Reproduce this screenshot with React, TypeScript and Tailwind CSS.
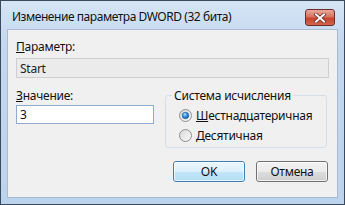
import React from "react";

// Диалог "Изменение параметра DWORD" в стиле Windows 7

const font = { fontFamily: '"Noto Sans", "Open Sans", sans-serif' };

const Radio: React.FC<{ checked?: boolean }> = ({ checked }) => (
  <svg width="13" height="13" viewBox="0 0 13 13" className="shrink-0">
    <defs>
      <linearGradient id={checked ? "rg1" : "rg0"} x1="0" y1="0" x2="1" y2="1">
        <stop offset="0" stopColor="#d8d8d8" />
        <stop offset="1" stopColor="#fbfbfb" />
      </linearGradient>
      <radialGradient id="dot" cx="0.4" cy="0.35" r="0.7">
        <stop offset="0" stopColor="#b6e3ff" />
        <stop offset="0.5" stopColor="#2c8fe0" />
        <stop offset="1" stopColor="#1a5aa0" />
      </radialGradient>
    </defs>
    <circle cx="6.5" cy="6.5" r="6" fill={`url(#${checked ? "rg1" : "rg0"})`} stroke="#8f8f8f" />
    {checked && <circle cx="6.5" cy="6.5" r="3.3" fill="url(#dot)" stroke="#1d5c97" strokeWidth="0.6" />}
  </svg>
);

const Button: React.FC<{ children: React.ReactNode; primary?: boolean }> = ({ children, primary }) => (
  <div
    className={
      primary
        ? "w-[72px] h-[21px] rounded-[3px] border border-[#3c7fb1] bg-[linear-gradient(#ecf7fd_0%,#dcf0fb_50%,#c3e6f9_51%,#b4def7_100%)] flex items-center justify-center text-[12px]"
        : "w-[72px] h-[21px] rounded-[3px] border border-[#707070] bg-[linear-gradient(#f2f2f2_0%,#ebebeb_50%,#dddddd_51%,#cfcfcf_100%)] flex items-center justify-center text-[12px]"
    }
  >
    <div className="w-full h-full rounded-[2px] border border-white/70 flex items-center justify-center">
      {children}
    </div>
  </div>
);

export default function App() {
  return (
    <div
      className="w-[345px] h-[205px] border border-[#3a4a5c] bg-[linear-gradient(#d6e5f6_0%,#c4d8f0_20%,#bcd3ee_100%)] flex flex-col text-[#111]"
      style={font}
    >
      {/* заголовок окна */}
      <div className="h-[28px] flex items-center pl-[11px] pr-[9px] pt-[3px]">
        <span className="text-[12px] tracking-[-0.45px] leading-none flex-1">Изменение параметра DWORD (32 бита)</span>
        <div className="w-[30px] h-[17px] mt-[2px] rounded-[3px] border border-[#6e2d2d] bg-[linear-gradient(#e9a99a_0%,#d7735f_45%,#c7442c_55%,#d2654e_100%)] flex items-center justify-center">
          <svg width="12" height="10" viewBox="0 0 12 10">
            <path d="M2 1.5 L10 8.5 M10 1.5 L2 8.5" stroke="#5a2020" strokeWidth="3.4" strokeLinecap="square" />
            <path d="M2 1.5 L10 8.5 M10 1.5 L2 8.5" stroke="#ffffff" strokeWidth="2" strokeLinecap="square" />
          </svg>
        </div>
      </div>

      {/* клиентская область */}
      <div className="flex-1 mx-[6px] mb-[6px] border border-[#a9bbd1] bg-[#f0f0f0] px-[8px] pt-[9px] text-[12px] tracking-[-0.25px] leading-[15px]">
        <div>
          <span className="underline">П</span>араметр:
        </div>
        <div className="mt-[4px] h-[20px] border border-[#cfcfcf] bg-[#ebebeb] px-[3px] flex items-center text-[#222]">
          Start
        </div>

        <div className="mt-[10px] flex">
          <div className="w-[138px]">
            <div>
              <span className="underline">З</span>начение:
            </div>
            <div className="mt-[2px] h-[19px] border border-[#8eaacc] bg-white px-[3px] flex items-center">
              3
            </div>
          </div>

          <div className="ml-[11px] w-[162px] relative h-[60px]">
            <div className="absolute left-0 right-0 top-[7px] bottom-0 border border-[#d5dfe5] rounded-[3px]" />
            <div className="relative ml-[7px] px-[2px] bg-[#f0f0f0] w-fit">Система исчисления</div>
            <div className="relative ml-[14px] mt-[2px] flex items-center gap-[4px] h-[20px]">
              <Radio checked />
              <span>
                <span className="underline">Ш</span>естнадцатеричная
              </span>
            </div>
            <div className="relative ml-[14px] flex items-center gap-[4px] h-[20px]">
              <Radio />
              <span>
                <span className="underline">Д</span>есятичная
              </span>
            </div>
          </div>
        </div>

        <div className="mt-[13px] flex justify-end gap-[11px] pr-[1px]">
          <Button primary>OK</Button>
          <Button>Отмена</Button>
        </div>
      </div>
    </div>
  );
}
